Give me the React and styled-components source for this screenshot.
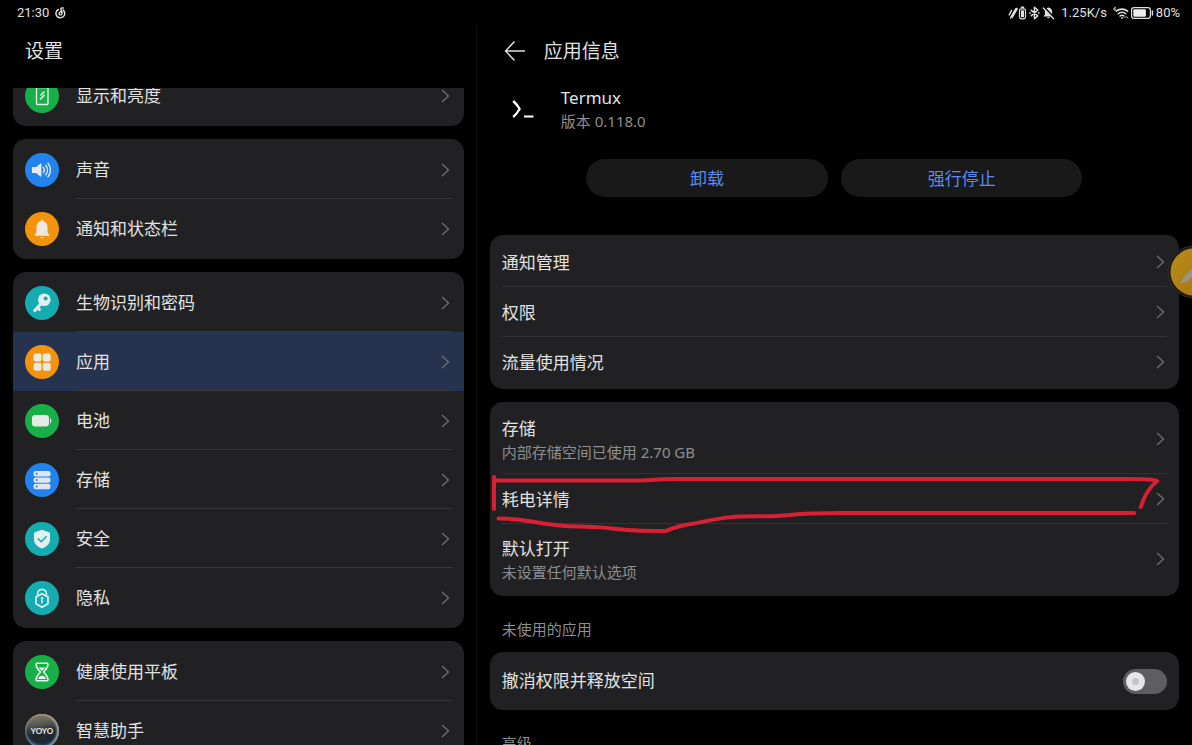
import React, { useState } from 'react'
import styled, { createGlobalStyle, css } from 'styled-components'

const GlobalStyle = createGlobalStyle`
  * {
    box-sizing: border-box;
  }
  body {
    margin: 0;
    background: #000;
    color: #e2e2e2;
    font-family: 'Noto Sans', 'Noto Sans CJK SC', sans-serif;
  }
  button {
    font: inherit;
    color: inherit;
    border: 0;
    padding: 0;
    background: none;
    cursor: pointer;
  }
`

/* ---------- status bar ---------- */

const NoteIcon = () => (
  <svg width="11" height="12" viewBox="0 0 11 12" fill="none" stroke="#e0e0e0" strokeWidth="1.4" strokeLinecap="round">
    <path d="M3.4 2.5A4.4 4.4 0 1 0 8 2.9" />
    <path d="M8.2 1C6.600.5 5.600 1.200 5.900 2.600l.9 3.600c.3 2-2.600 2.300-2.700.5C4 4.800 6.200 4.200 7.600 5" />
  </svg>
)

const PenBatteryIcon = () => (
  <svg width="19" height="14" viewBox="0 0 19 14" fill="none" stroke="#e0e0e0" strokeLinecap="round">
    <path d="M1.200 9L3.600 4.400" strokeWidth="1.400" />
    <path d="M4 10.600L8.400 3" strokeWidth="2.600" />
    <path d="M2.600 12.400l.8-2" strokeWidth="1.200" />
    <rect x="11.500" y="2.800" width="6" height="10" rx="1.800" strokeWidth="1.200" />
    <path d="M13.400 1.300h2.200" strokeWidth="1.400" />
    <rect x="13" y="4.400" width="3" height="6.800" fill="#e0e0e0" stroke="none" />
  </svg>
)

const BluetoothIcon = () => (
  <svg width="11" height="14" viewBox="0 0 11 14" fill="none" stroke="#e0e0e0" strokeWidth="1.400" strokeLinejoin="round">
    <path d="M1.800 3.900l7 6L5.400 12.800V1.200l3.400 2.900-7 6" />
    <path d="M.2 7h1.600M9 7h1.600" strokeWidth="1.600" />
  </svg>
)

const MuteIcon = () => (
  <svg width="13" height="14" viewBox="0 0 13 14">
    <path d="M6.500 1.600c2.400.3 3.600 2 3.600 4.200v2.600l1.300 2H1.600l1.300-2V5.800c0-2.200 1.200-3.900 3.600-4.200z" fill="#e0e0e0" />
    <path d="M5 11.200h3c-.4 1.400-2.600 1.400-3 0z" fill="#e0e0e0" />
    <path d="M2.100 1.200l10.300 10.800" stroke="#000" strokeWidth="1.800" />
    <path d="M1.200 2l10.400 10.800" stroke="#e0e0e0" strokeWidth="1.300" strokeLinecap="round" />
  </svg>
)

const WifiIcon = () => (
  <svg width="16" height="14" viewBox="0 0 16 14" fill="none" stroke="#e0e0e0" strokeLinecap="round">
    <path d="M3.400 5.200C6.400 2.400 11.400 2.400 14.600 5.200" strokeWidth="1.600" />
    <path d="M5.200 7.700C7.200 5.800 10.800 5.800 12.800 7.700" strokeWidth="1.500" />
    <path d="M7 10c1.200-1 2.800-1 4 0" strokeWidth="1.400" />
    <circle cx="9" cy="12" r=".6" fill="#e0e0e0" strokeWidth=".6" />
    <path d="M2.600 1.200C1.200 1.200.8 2.200.8 3.400c0 1.400 2 1.400 2 .1 0-1.100-1.300-1.200-1.900-.5" strokeWidth=".9" />
    <path d="M12 11.600l1-1M14 11l1 1" strokeWidth="1" />
  </svg>
)

const BatteryIcon = () => (
  <svg width="23" height="12" viewBox="0 0 23 12" fill="none">
    <rect x=".6" y=".6" width="18.800" height="10.800" rx="2.400" stroke="#e0e0e0" strokeWidth="1.200" />
    <rect x="2.300" y="2.300" width="12.600" height="7.400" rx="1" fill="#ededed" />
    <path d="M21.400 4v4" stroke="#e0e0e0" strokeWidth="1.400" strokeLinecap="round" />
  </svg>
)

/* ---------- list icons, 34px discs ---------- */

const glyphs = {
  display: (
    <>
      <rect x="11.500" y="8.500" width="11.500" height="17" rx="1" fill="none" stroke="#e8f5ec" strokeWidth="1.300" />
      <path d="M15.500 16.500l4-4M15 20.500l4.600-4.600" stroke="#e8f5ec" strokeWidth="1.500" />
    </>
  ),
  sound: (
    <>
      <path d="M7.500 14h3.600l4.400-3.600c.4-.3.900 0 .9.400v12.400c0 .4-.5.700-.9.400L11.100 20H7.500c-.4 0-.6-.2-.6-.6v-4.800c0-.4.2-.6.6-.6z" fill="#e6e8ec" />
      <path d="M18.400 14.300c1.100 1.600 1.100 3.800 0 5.400M20.800 12.200c2.200 2.800 2.200 6.800 0 9.600M23 10.300c3.200 3.900 3.200 9.500 0 13.400" fill="none" stroke="#e6e8ec" strokeWidth="1.400" strokeLinecap="round" />
    </>
  ),
  bell: (
    <>
      <path d="M17 7.800c.9 0 1.300.6 1.300 1.400 2.700.7 4.200 2.900 4.200 5.600v5.400l1.900 2.700c.2.400 0 .8-.4.800H10c-.4 0-.6-.4-.4-.8l1.900-2.700v-5.400c0-2.700 1.500-4.900 4.200-5.600 0-.8.400-1.400 1.300-1.400z" fill="#ece8e0" />
      <path d="M15.200 25.200h3.600c-.5 1.400-3.100 1.400-3.600 0z" fill="#ece8e0" />
    </>
  ),
  key: (
    <>
      <path d="M15.400 18.200L9.800 24.600M12.600 21.600l1.800 1.800" stroke="#e3efee" strokeWidth="3" strokeLinecap="round" />
      <circle cx="19.300" cy="13.700" r="6.300" fill="#e3efee" />
      <circle cx="20.600" cy="12.600" r="2" fill="#14acb0" />
    </>
  ),
  apps: (
    <g fill="#ece8e0">
      <rect x="8.500" y="8.500" width="8" height="8" rx="2" />
      <rect x="17.700" y="8.500" width="8" height="8" rx="2" />
      <rect x="8.500" y="17.700" width="8" height="8" rx="2" />
      <rect x="17.700" y="17.700" width="8" height="8" rx="2" />
    </g>
  ),
  battery: (
    <>
      <rect x="7" y="11" width="17" height="11.500" rx="3.200" fill="#e4ebe6" />
      <path d="M25 14.200c1.800.3 1.800 4.900 0 5.200z" fill="#e4ebe6" />
    </>
  ),
  storage: (
    <>
      <g fill="#e0e6ee">
        <rect x="8.500" y="8" width="17" height="5.400" rx="2.200" />
        <rect x="8.500" y="14.400" width="17" height="5.400" rx="2.200" />
        <rect x="8.500" y="20.800" width="17" height="5.400" rx="2.200" />
      </g>
      <g fill="#2383ee">
        <circle cx="11.700" cy="10.700" r="1" />
        <circle cx="11.700" cy="17.100" r="1" />
        <circle cx="11.700" cy="23.500" r="1" />
      </g>
    </>
  ),
  shield: (
    <>
      <path d="M17 7.800l7 2.400c.6.200 1 .7 1 1.300v6c0 4-3 7.200-8 9-5-1.800-8-5-8-9v-6c0-.6.400-1.100 1-1.300z" fill="#e3efee" />
      <path d="M13.200 16.800l3 3 5-5" fill="none" stroke="#14a5ab" strokeWidth="1.300" strokeLinecap="round" />
    </>
  ),
  privacy: (
    <>
      <path d="M12.600 14.200v-1.500a4.400 4.400 0 0 1 8.800 0v1.500" fill="none" stroke="#dff0f0" strokeWidth="1.700" />
      <path d="M17 12.700l6 3.400v6.700l-6 3.500-6-3.500v-6.700z" fill="none" stroke="#dff0f0" strokeWidth="1.700" strokeLinejoin="round" />
      <path d="M17 18.500v3.800" stroke="#dff0f0" strokeWidth="1.500" />
      <circle cx="17" cy="17.200" r="1.200" fill="#dff0f0" />
    </>
  ),
  hourglass: (
    <>
      <path d="M12 8.200h10c.7 0 1 .4 1 1 0 3.600-2 5.200-4.400 7.800 2.400 2.600 4.400 4.200 4.400 7.800 0 .6-.3 1-1 1H12c-.7 0-1-.4-1-1 0-3.600 2-5.200 4.400-7.800-2.400-2.600-4.400-4.200-4.400-7.800 0-.6.3-1 1-1z" fill="none" stroke="#e8f5ec" strokeWidth="1.500" />
      <path d="M13.600 12.600h6.800L17 16zM13 24c.4-2.200 2-3.200 4-3.200s3.600 1 4 3.200z" fill="#e8f5ec" />
    </>
  ),
}

const ListIcon = ({ name, color }) => (
  <Disc $color={color}>
    <svg width="34" height="34" viewBox="0 0 34 34">{glyphs[name]}</svg>
  </Disc>
)

const Chevron = () => (
  <svg width="12" height="16" viewBox="0 0 12 16" fill="none" stroke="#6c6c6f" strokeWidth="1.400">
    <path d="M2 2l6.500 6L2 14" />
  </svg>
)

const groups = [
  [{ label: '显示和亮度', icon: 'display', color: '#17b048' }],
  [
    { label: '声音', icon: 'sound', color: '#2383ee' },
    { label: '通知和状态栏', icon: 'bell', color: '#f3920b' },
  ],
  [
    { label: '生物识别和密码', icon: 'key', color: '#14acb0' },
    { label: '应用', icon: 'apps', color: '#f3920b', active: true },
    { label: '电池', icon: 'battery', color: '#17b048' },
    { label: '存储', icon: 'storage', color: '#2383ee' },
    { label: '安全', icon: 'shield', color: '#14acb0' },
    { label: '隐私', icon: 'privacy', color: '#14acb0' },
  ],
  [
    { label: '健康使用平板', icon: 'hourglass', color: '#17b048' },
    { label: '智慧助手', icon: 'yoyo' },
  ],
]

const StatusBar = () => (
  <Status>
    <StatusGroup>
      <span>21:30</span>
      <NoteIcon />
    </StatusGroup>
    <StatusGroup $tight>
      <PenBatteryIcon />
      <BluetoothIcon />
      <MuteIcon />
      <Speed>1.25K/s</Speed>
      <WifiIcon />
      <BatteryIcon />
      <span>80%</span>
    </StatusGroup>
  </Status>
)

const Sidebar = () => (
  <Side>
    <SideTitle>设置</SideTitle>
    <SideScroll>
      <SideList>
        {groups.map((items) => (
          <SideCard key={items[0].label}>
            {items.map((item) => (
              <SideRow key={item.label} $active={item.active}>
                {item.icon === 'yoyo' ? <Orb>YOYO</Orb> : <ListIcon name={item.icon} color={item.color} />}
                <SideBody>
                  <span>{item.label}</span>
                  <Chevron />
                </SideBody>
              </SideRow>
            ))}
          </SideCard>
        ))}
      </SideList>
    </SideScroll>
  </Side>
)

const DetailRow = ({ label, note, children }) => (
  <Row $tall={!!note}>
    <RowBody>
      <RowText>
        <span>{label}</span>
        {note && <Note>{note}</Note>}
      </RowText>
      <Chevron />
    </RowBody>
    {children}
  </Row>
)

// hand drawn marker around a row
const Scribble = () => (
  <ScribbleSvg viewBox="0 0 690 70" preserveAspectRatio="none">
    <path d="M4 9v32" />
    <path d="M4 12.500H150C165 12.500 165 11 185 11H640C652 11 664 11 668 13C660 19 655 28 651.500 39" />
    <path d="M8.500 50.500C35 50 40 55 70 57.500C90 59.500 105 58 122 60.500C140 63 160 63 176 63C182 61 185 59 195 57C215 54 230 49 250 48.500C270 48 280 49 300 47C320 44.500 330 45.500 350 45H645" />
  </ScribbleSvg>
)

const Detail = () => {
  const [release, setRelease] = useState(false)

  return (
    <Main>
      <MainHeader>
        <BackButton aria-label="返回">
          <svg width="22" height="22" viewBox="0 0 22 22" fill="none" stroke="#e0e0e0" strokeWidth="1.400">
            <path d="M21 11H1.500M10.500 1.500L1.500 11l9 9.500" />
          </svg>
        </BackButton>
        <span>应用信息</span>
      </MainHeader>

      <AppInfo>
        <svg width="24" height="22" viewBox="0 0 24 22" fill="none" stroke="#fff" strokeWidth="2.400">
          <path d="M2.200 3C5 5.500 7.200 8.500 8.600 11C7.200 13.500 5 16.500 2.200 19" />
          <path d="M13 18.500h9.500" strokeWidth="2" />
        </svg>
        <div>
          <AppName>Termux</AppName>
          <AppVersion>版本 0.118.0</AppVersion>
        </div>
      </AppInfo>

      <Actions>
        <ActionButton>卸载</ActionButton>
        <ActionButton>强行停止</ActionButton>
      </Actions>

      <Cards>
        <Card>
          <DetailRow label="通知管理" />
          <DetailRow label="权限" />
          <DetailRow label="流量使用情况" />
        </Card>
        <Card>
          <DetailRow label="存储" note="内部存储空间已使用 2.70 GB" />
          <DetailRow label="耗电详情">
            <Scribble />
          </DetailRow>
          <DetailRow label="默认打开" note="未设置任何默认选项" />
        </Card>
      </Cards>

      <SectionTitle>未使用的应用</SectionTitle>
      <SwitchCard>
        <label htmlFor="release">撤消权限并释放空间</label>
        <Switch id="release" type="checkbox" role="switch" checked={release} onChange={() => setRelease(!release)} />
      </SwitchCard>
      <SectionTitle>高级</SectionTitle>
    </Main>
  )
}

const App = () => (
  <Page>
    <GlobalStyle />
    <StatusBar />
    <Panes>
      <Sidebar />
      <Detail />
    </Panes>
    <FloatingPen aria-label="手写笔">
      <svg width="54" height="54" viewBox="0 0 54 54">
        <defs>
          <linearGradient id="gold" x1="0" y1="0" x2="1" y2="1">
            <stop offset="0" stopColor="#b88c1c" />
            <stop offset="1" stopColor="#a87409" />
          </linearGradient>
        </defs>
        <circle cx="27" cy="27" r="26" fill="#1c1c1d" stroke="#2c2c2e" />
        <circle cx="27" cy="27" r="23.500" fill="url(#gold)" />
        <path d="M13 39l3-6 17-18 5 5-17 16z" fill="#98948a" />
      </svg>
    </FloatingPen>
  </Page>
)

const Page = styled.div`
  position: relative;
  height: 100vh;
  overflow: hidden;
  display: flex;
  flex-direction: column;
`

const Status = styled.header`
  height: 26px;
  flex-shrink: 0;
  padding: 0 12px 0 17px;
  display: flex;
  align-items: center;
  justify-content: space-between;
  font-family: Roboto, sans-serif;
  font-size: 13px;
  line-height: 16px;
  color: #e0e0e0;
`

const StatusGroup = styled.div`
  display: flex;
  align-items: center;
  gap: ${({ $tight }) => ($tight ? 2 : 6)}px;
`

const Speed = styled.span`
  margin: 0 4px;
`

const Panes = styled.div`
  flex: 1;
  min-height: 0;
  display: grid;
  grid-template-columns: 2fr 3fr;
`

const Side = styled.nav`
  min-width: 0;
  min-height: 0;
  display: flex;
  flex-direction: column;
  border-right: 1px solid #101011;
`

const SideTitle = styled.h1`
  margin: 0;
  height: 62px;
  flex-shrink: 0;
  padding: 11px 25px;
  font-size: 19px;
  line-height: 28px;
  font-weight: 400;
`

const SideScroll = styled.div`
  flex: 1;
  min-height: 0;
  overflow: hidden;
  padding: 0 12px 0 13px;
`

/* list is scrolled a little, the first card is cut by the header */
const SideList = styled.div`
  margin-top: -23px;
  display: flex;
  flex-direction: column;
  gap: 13px;
`

const SideCard = styled.div`
  padding: 1px 0;
  border-radius: 13px;
  background: #212123;
`

const SideBody = styled.span`
  flex: 1;
  height: 100%;
  padding-top: 2px;
  display: flex;
  align-items: center;
  justify-content: space-between;
  border-bottom: 1px solid #38383a;
`

const SideRow = styled.button`
  width: 100%;
  height: 59px;
  padding: 0 12px;
  display: flex;
  align-items: center;
  gap: 17px;
  text-align: left;
  font-size: 17px;
  line-height: 24px;

  ${({ $active }) =>
    $active &&
    css`
      background: #26334f;
    `}

  &:last-child ${SideBody} {
    border-color: transparent;
  }
`

const Disc = styled.span`
  width: 34px;
  height: 34px;
  flex-shrink: 0;
  border-radius: 50%;
  background: ${({ $color }) => $color};

  svg {
    display: block;
  }
`

const Orb = styled.span`
  width: 34px;
  height: 34px;
  flex-shrink: 0;
  display: flex;
  align-items: center;
  justify-content: center;
  border-radius: 50%;
  background: linear-gradient(170deg, #8b8371 0%, #5c5c56 30%, #22282b 55%, #1d2b3a 100%);
  box-shadow: inset 0 -2px 3px #5f8fc0, inset 0 1px 2px #b89b6a, inset -2px 0 2px #a9a9a4;
  color: #e8e8e8;
  font-family: Lato, sans-serif;
  font-size: 8px;
  font-weight: 700;
  line-height: 10px;
`

const Main = styled.main`
  min-width: 0;
  padding: 0 13px;
  overflow: hidden;
`

const MainHeader = styled.h2`
  margin: 0;
  height: 48px;
  padding: 2px 14px 0;
  display: flex;
  align-items: center;
  gap: 18px;
  font-size: 19px;
  line-height: 28px;
  font-weight: 400;
`

const BackButton = styled.button`
  width: 22px;
  height: 22px;

  svg {
    display: block;
  }
`

const AppInfo = styled.section`
  padding: 12px 21px 27px;
  display: flex;
  align-items: center;
  gap: 26px;
`

const AppName = styled.div`
  font-size: 17px;
  line-height: 24px;
`

const AppVersion = styled.div`
  font-size: 15px;
  line-height: 22px;
  color: #8e8e8e;
`

const Actions = styled.div`
  width: 72%;
  margin: 0 auto 38px;
  display: grid;
  grid-template-columns: 1fr 1fr;
  gap: 13px;
`

const ActionButton = styled.button`
  height: 38px;
  padding-top: 2px;
  border-radius: 19px;
  background: #19191a;
  color: #5a8cf0;
  font-size: 17px;
  line-height: 24px;
`

const Cards = styled.div`
  display: flex;
  flex-direction: column;
  gap: 13px;
`

const Card = styled.div`
  padding: 2px 0;
  border-radius: 13px;
  background: #212123;
`

const RowBody = styled.span`
  flex: 1;
  height: 100%;
  display: flex;
  align-items: center;
  justify-content: space-between;
  border-bottom: 1px solid #323234;
`

const Row = styled.button`
  position: relative;
  width: 100%;
  height: ${({ $tall }) => ($tall ? 70 : 50)}px;
  padding: 0 12px;
  display: flex;
  text-align: left;
  font-size: 17px;
  line-height: 24px;

  &:last-child ${RowBody} {
    border-color: transparent;
  }
`

const RowText = styled.span`
  padding-top: 2px;
  display: flex;
  flex-direction: column;
`

const Note = styled.span`
  font-size: 15px;
  line-height: 22px;
  color: #8e8e90;
`

const ScribbleSvg = styled.svg`
  position: absolute;
  left: 0;
  top: -6px;
  width: 100%;
  height: 70px;
  z-index: 1;
  pointer-events: none;
  fill: none;
  stroke: #d91f34;
  stroke-width: 4px;
  stroke-linecap: round;
  stroke-linejoin: round;
`

const SectionTitle = styled.h3`
  margin: 0;
  padding: 23px 12px 13px;
  font-size: 15px;
  line-height: 20px;
  font-weight: 400;
  color: #8e8e8e;
`

const SwitchCard = styled.div`
  height: 58px;
  padding: 0 12px;
  display: flex;
  align-items: center;
  justify-content: space-between;
  border-radius: 13px;
  background: #212123;
  font-size: 17px;
  line-height: 24px;
`

const Switch = styled.input`
  appearance: none;
  width: 44px;
  height: 25px;
  margin: 0;
  padding: 3px;
  border-radius: 13px;
  background: #5e5e60;
  cursor: pointer;

  &::before {
    content: '';
    display: block;
    width: 19px;
    height: 19px;
    border-radius: 50%;
    background: radial-gradient(circle, #c4c4c4 3px, #e6e6e6 4px);
  }
  &:checked {
    background: #2f6fe4;
  }
  &:checked::before {
    margin-left: auto;
  }
`

const FloatingPen = styled.button`
  position: absolute;
  top: 245px;
  right: -29px;
  width: 54px;
  height: 54px;

  svg {
    display: block;
  }
`

export default App
